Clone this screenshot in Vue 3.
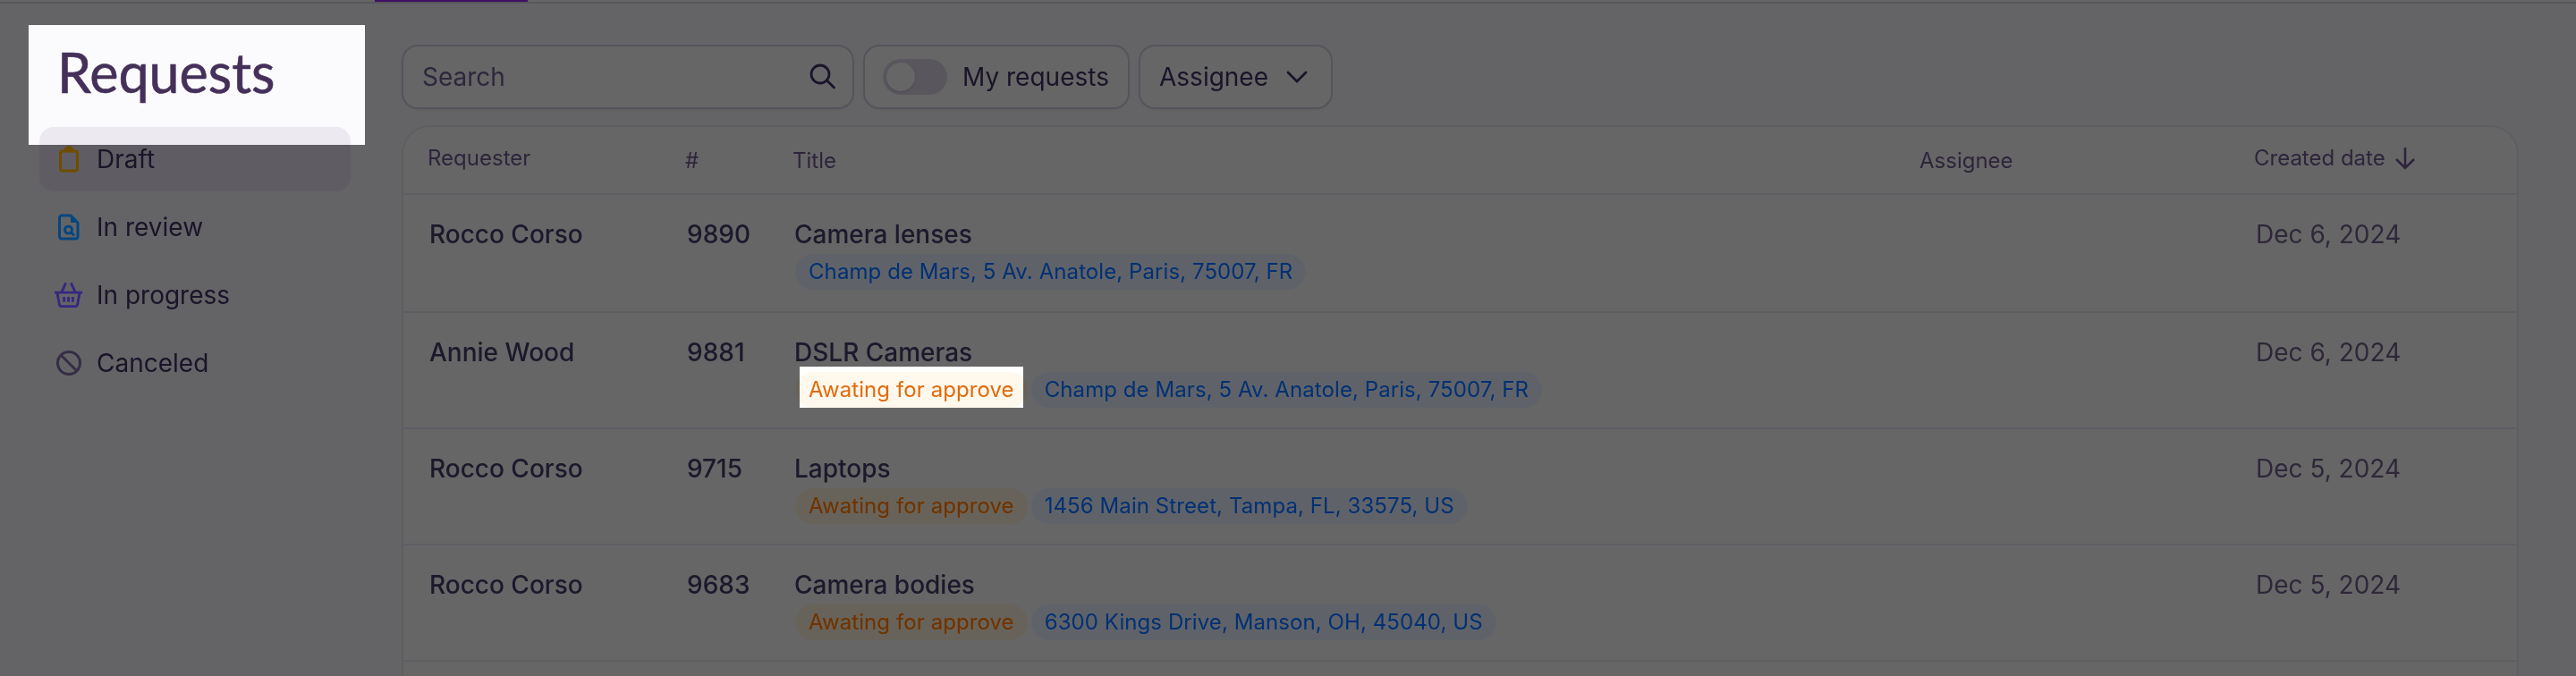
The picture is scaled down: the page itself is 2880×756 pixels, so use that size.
<script setup>
const nav = [
  { label: 'Draft', icon: 'draft', active: true },
  { label: 'In review', icon: 'review' },
  { label: 'In progress', icon: 'basket' },
  { label: 'Canceled', icon: 'cancel' }
]
const rows = [
  { who: 'Rocco Corso', id: '9890', title: 'Camera lenses', approve: false, addr: 'Champ de Mars, 5 Av. Anatole, Paris, 75007, FR', date: 'Dec 6, 2024' },
  { who: 'Annie Wood', id: '9881', title: 'DSLR Cameras', approve: true, lit: true, addr: 'Champ de Mars, 5 Av. Anatole, Paris, 75007, FR', date: 'Dec 6, 2024' },
  { who: 'Rocco Corso', id: '9715', title: 'Laptops', approve: true, addr: '1456 Main Street, Tampa, FL, 33575, US', date: 'Dec 5, 2024' },
  { who: 'Rocco Corso', id: '9683', title: 'Camera bodies', approve: true, addr: '6300 Kings Drive, Manson, OH, 45040, US', date: 'Dec 5, 2024' }
]
</script>

<template>
  <div class="page">
    <div class="topbar"><div class="progress"></div></div>
    <div class="body">
      <aside class="side">
        <h1 class="title">Requests</h1>
        <nav class="nav">
          <a v-for="n in nav" :key="n.label" class="item" :class="{ active: n.active }">
            <span class="ico">
              <svg v-if="n.icon === 'draft'" width="24" height="30" viewBox="0 0 24 30" fill="none" stroke="#f0c030" stroke-width="3">
                <rect x="2.500" y="6" width="19" height="22" rx="2.500" />
                <path d="M8 6V5.500a4 4 0 0 1 8 0V6" fill="#f0c030" />
              </svg>
              <svg v-else-if="n.icon === 'review'" width="24" height="30" viewBox="0 0 24 30" fill="none" stroke="#48a4f4" stroke-width="3">
                <path d="M4 2h10l8 8v15.500a2.500 2.500 0 0 1-2.500 2.500h-15A2.500 2.500 0 0 1 1.500 25.500v-21A2.500 2.500 0 0 1 4 2z" />
                <path d="M14 1.500l8 8.500h-8z" fill="#48a4f4" stroke="none" />
                <circle cx="11.500" cy="18" r="4" />
                <path d="M14.500 21l3.500 3.500" />
              </svg>
              <svg v-else-if="n.icon === 'basket'" width="34" height="30" viewBox="0 0 34 30" fill="none" stroke="#826eeb" stroke-width="3">
                <path d="M1 12h32" />
                <path d="M4 12l2.500 13.500a3 3 0 0 0 3 2.500h15a3 3 0 0 0 3-2.500L30 12" />
                <path d="M9 12l5-11M25 12l-5-11" />
                <path d="M12 17v6M17 17v6M22 17v6" />
              </svg>
              <svg v-else width="30" height="30" viewBox="0 0 30 30" fill="none" stroke="#827598" stroke-width="3">
                <circle cx="15" cy="15" r="12.500" />
                <path d="M6 6l18 18" />
              </svg>
            </span>
            <span>{{ n.label }}</span>
          </a>
        </nav>
      </aside>
      <main class="main">
        <div class="toolbar">
          <label class="box search">
            <span class="ph">Search</span>
            <svg width="32" height="36" viewBox="0 0 32 36" fill="none" stroke="#3f3552" stroke-width="2.800">
              <circle cx="13" cy="15" r="10" />
              <path d="M20.500 22l8 8" stroke-linecap="round" />
            </svg>
          </label>
          <div class="box toggle">
            <span class="track"><span class="knob"></span></span>
            <span>My requests</span>
          </div>
          <div class="box assignee">
            <span>Assignee</span>
            <svg width="24" height="14" viewBox="0 0 24 14" fill="none" stroke="#3f3552" stroke-width="2.800">
              <path d="M2 2l10 10L22 2" stroke-linecap="round" />
            </svg>
          </div>
        </div>
        <section class="table">
          <div class="head">
            <span class="h-up">Requester</span>
            <span>#</span>
            <span>Title</span>
            <span>Assignee</span>
            <span class="h-up created">Created date
              <svg width="24" height="26" viewBox="0 0 24 26" fill="none" stroke="#6c5f7e" stroke-width="2.600">
                <path d="M12 1v23M2 14l10 10 10-10" />
              </svg>
            </span>
          </div>
          <div v-for="r in rows" :key="r.id" class="row">
            <span class="cell">{{ r.who }}</span>
            <span class="cell">{{ r.id }}</span>
            <div>
              <div class="cell">{{ r.title }}</div>
              <div class="chips">
                <span v-if="r.approve" class="chip orange" :class="{ lit: r.lit }">Awating for approve</span>
                <span class="chip blue">{{ r.addr }}</span>
              </div>
            </div>
            <span></span>
            <span class="cell date">{{ r.date }}</span>
          </div>
        </section>
      </main>
    </div>
    <div class="overlay"></div>
  </div>
</template>

<style>
html, body { margin: 0; overflow: hidden; background: #fbfbfd; }
</style>

<style scoped>
.page {
  position: relative;
  width: 2880px;
  height: 756px;
  overflow: hidden;
  background: #fbfbfd;
  color: #3f3552;
  font-family: Inter, "Liberation Sans", sans-serif;
  font-size: 28px;
  display: flex;
  flex-direction: column;
}
.topbar {
  height: 2px;
  border-bottom: 2px solid #dcd8e2;
  background: #fff;
  flex: none;
  display: flex;
}
.progress {
  margin-left: 419px;
  width: 171px;
  height: 2px;
  background: #7a3ab0;
}
.body { flex: 1; display: flex; min-height: 0; }
.side { width: 348px; margin-left: 44px; flex: none; }
.title {
  margin: 0;
  height: 138px;
  padding: 45px 0 0 20px;
  box-sizing: border-box;
  font-family: Lato, "Noto Sans", sans-serif;
  font-weight: 400;
  font-size: 61px;
  line-height: 64px;
  color: #45305a;
  -webkit-text-stroke: 0.6px #45305a;
}
.nav { display: flex; flex-direction: column; gap: 4px; }
.item {
  height: 72px;
  display: flex;
  align-items: center;
  gap: 15px;
  padding-left: 16px;
  border-radius: 16px;
  color: #3f3552;
}
.item.active { background: #ece9f1; }
.ico { width: 33px; display: flex; justify-content: center; }
.main {
  flex: 1;
  margin: 0 64px 0 57px;
  padding-top: 46px;
  display: flex;
  flex-direction: column;
  min-width: 0;
}
.toolbar { display: flex; gap: 10px; height: 72px; flex: none; }
.box {
  box-sizing: border-box;
  height: 72px;
  border: 2px solid #d4d0dc;
  border-radius: 18px;
  display: flex;
  align-items: center;
  background: #fff;
  box-shadow: 0 1px 2px rgba(40, 30, 60, 0.06);
}
.search { width: 506px; padding: 0 17px 0 21px; justify-content: space-between; }
.ph { color: #6f6480; }
.toggle { width: 298px; padding-left: 20px; gap: 17px; }
.track {
  width: 72px;
  height: 40px;
  border-radius: 20px;
  background: #dedbe3;
  display: flex;
  align-items: center;
  padding-left: 4px;
  box-sizing: border-box;
}
.knob {
  width: 32px;
  height: 32px;
  border-radius: 50%;
  background: #fff;
  box-shadow: 0 1px 3px rgba(40, 30, 60, 0.2);
}
.assignee { width: 217px; padding-left: 21px; gap: 20px; }
.table {
  margin-top: 18px;
  flex: 1;
  border: 2px solid #eceaf1;
  border-bottom: 0;
  border-radius: 32px 32px 0 0;
  background: #fff;
}
.head, .row {
  display: grid;
  grid-template-columns: 288px 120px 1260px 374px 1fr;
  border-bottom: 2px solid #eceaf1;
}
.head {
  height: 76px;
  padding: 22px 0 0 27px;
  box-sizing: border-box;
  font-size: 24px;
  line-height: 32px;
  color: #6c5f7e;
}
.h-up { margin-top: -3px; }
.created { display: flex; align-items: center; gap: 10px; height: 32px; }
.row {
  height: 130px;
  padding: 26px 0 0 29px;
  box-sizing: border-box;
}
.row:nth-child(2) { height: 132px; }
.cell { line-height: 36px; color: #46405b; font-weight: 500; }
.date { color: #71667f; font-weight: 400; }
.chips { display: flex; gap: 4px; margin: 4px 0 0 1px; }
.chip {
  height: 40px;
  line-height: 40px;
  padding: 0 15px;
  border-radius: 20px;
  font-size: 24px;
  letter-spacing: 0.08px;
}
.orange { background: #fff8ec; color: #dc8420; }
.orange.lit { color: #e26a0c; }
.blue { background: #f2f7ff; color: #3272d0; }
.overlay {
  position: absolute;
  inset: 0;
  backdrop-filter: brightness(0.4) saturate(1.8);
  clip-path: path(evenodd, "M0 0H2880V756H0Z M32 28H408V162H32Z M894 410H1144V456H894Z");
}
</style>
